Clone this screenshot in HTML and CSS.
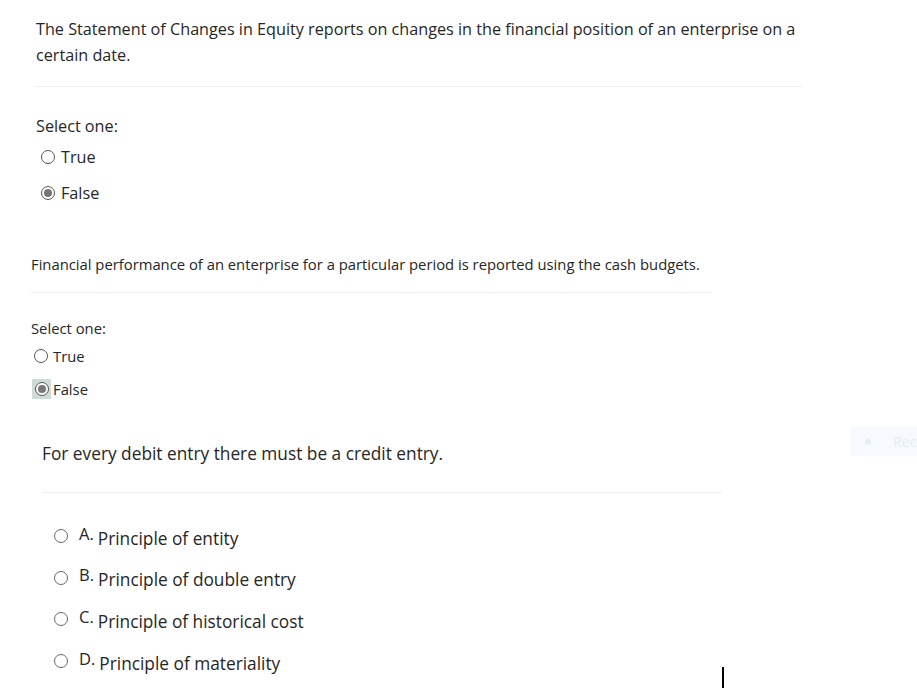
FILE: index.html
```html
<!DOCTYPE html>
<html>
<head>
<meta charset="utf-8">
<link rel="stylesheet" href="styles.css">
</head>
<body>
<div class="page">
  <section class="q q1">
    <div class="qtext">The Statement of Changes in Equity reports on changes in the financial position of an enterprise on a certain date.</div>
    <div class="sep"></div>
    <div class="prompt">Select one:</div>
    <div class="opt"><span class="radio"></span>True</div>
    <div class="opt"><span class="radio checked"></span>False</div>
  </section>
  <section class="q q2">
    <div class="qtext">Financial performance of an enterprise for a particular period is reported using the cash budgets.</div>
    <div class="sep"></div>
    <div class="prompt">Select one:</div>
    <div class="opt"><span class="radio"></span>True</div>
    <div class="opt"><span class="hl"><span class="radio checked"></span></span>False</div>
  </section>
  <section class="q q3">
    <div class="qtext">For every debit entry there must be a credit entry.</div>
    <div class="sep"></div>
    <div class="opts">
      <div class="opt"><span class="radio"></span><span class="letter">A.</span><span class="ans">Principle of entity</span></div>
      <div class="opt"><span class="radio"></span><span class="letter">B.</span><span class="ans">Principle of double entry</span></div>
      <div class="opt"><span class="radio"></span><span class="letter">C.</span><span class="ans">Principle of historical cost</span></div>
      <div class="opt"><span class="radio"></span><span class="letter">D.</span><span class="ans">Principle of materiality</span></div>
    </div>
  </section>
</div>
<div class="ghost"><span class="gdot"></span>Rec</div>
<div class="caret"></div>
</body>
</html>
```

FILE: styles.css
```css
html, body { margin: 0; padding: 0; background: #fff; }
body { font-family: "Open Sans", "Noto Sans", sans-serif; color: #262626; width: 917px; height: 695px; overflow: hidden; position: relative; }
.page { display: flex; flex-direction: column; }

.radio { display: inline-block; box-sizing: border-box; width: 14px; height: 14px; border: 1px solid #555; border-radius: 50%; background: #fff; position: relative; flex: none; }
.radio.checked { border-color: #555; }
.radio.checked::after { content: ""; position: absolute; left: 2px; top: 2px; width: 8px; height: 8px; border-radius: 50%; background: #777; }

.q1 { padding: 16px 0 0 36px; width: 766px; font-size: 16.2px; }
.q1 .qtext { line-height: 26px; }
.q1 .sep { height: 1px; background: #eeeeee; margin-top: 18px; }
.q1 .prompt { margin-top: 27px; line-height: 24px; }
.q1 .opt { display: flex; align-items: center; gap: 6px; padding-left: 5px; line-height: 24px; margin-top: 7px; }
.q1 .opt + .opt { margin-top: 12px; }

.q2 { padding: 49px 0 0 31px; width: 681px; font-size: 14.8px; }
.q2 .qtext { line-height: 20px; }
.q2 .sep { height: 1px; background: #eeeeee; margin-top: 18px; }
.q2 .prompt { margin-top: 25px; line-height: 20px; }
.q2 .opt { display: flex; align-items: center; gap: 5px; padding-left: 3px; line-height: 20px; margin-top: 8px; }
.q2 .opt + .opt { margin-top: 13px; }
.q2 .hl { display: inline-flex; align-items: center; justify-content: center; width: 19px; height: 20px; margin-left: -2px; margin-right: -3px; background: #cfdcd6; }

.q3 { padding: 42px 0 0 42px; width: 680px; font-size: 17.3px; }
.q3 .qtext { line-height: 26px; }
.q3 .sep { height: 1px; background: #f0f0f0; margin-top: 25px; }
.q3 .opts { display: flex; flex-direction: column; gap: 15.7px; padding: 30px 0 0 12px; }
.q3 .opt { display: flex; align-items: center; height: 26px; }
.q3 .radio { width: 14px; height: 14px; border-color: #666; }
.q3 .letter { margin-left: 11px; font-size: 16.5px; position: relative; top: -3px; }
.q3 .ans { margin-left: 4px; position: relative; top: 2px; }

.ghost { position: absolute; left: 851px; top: 427px; width: 80px; height: 29px; background: #f6f9fd; color: #e6ecf5; font-size: 14px; display: flex; align-items: center; gap: 22px; padding-left: 14px; box-sizing: border-box; }
.gdot { width: 6px; height: 6px; border-radius: 50%; background: #e6ecf6; }
.caret { position: absolute; left: 722px; top: 667px; width: 2px; height: 21px; background: #000; }
```
